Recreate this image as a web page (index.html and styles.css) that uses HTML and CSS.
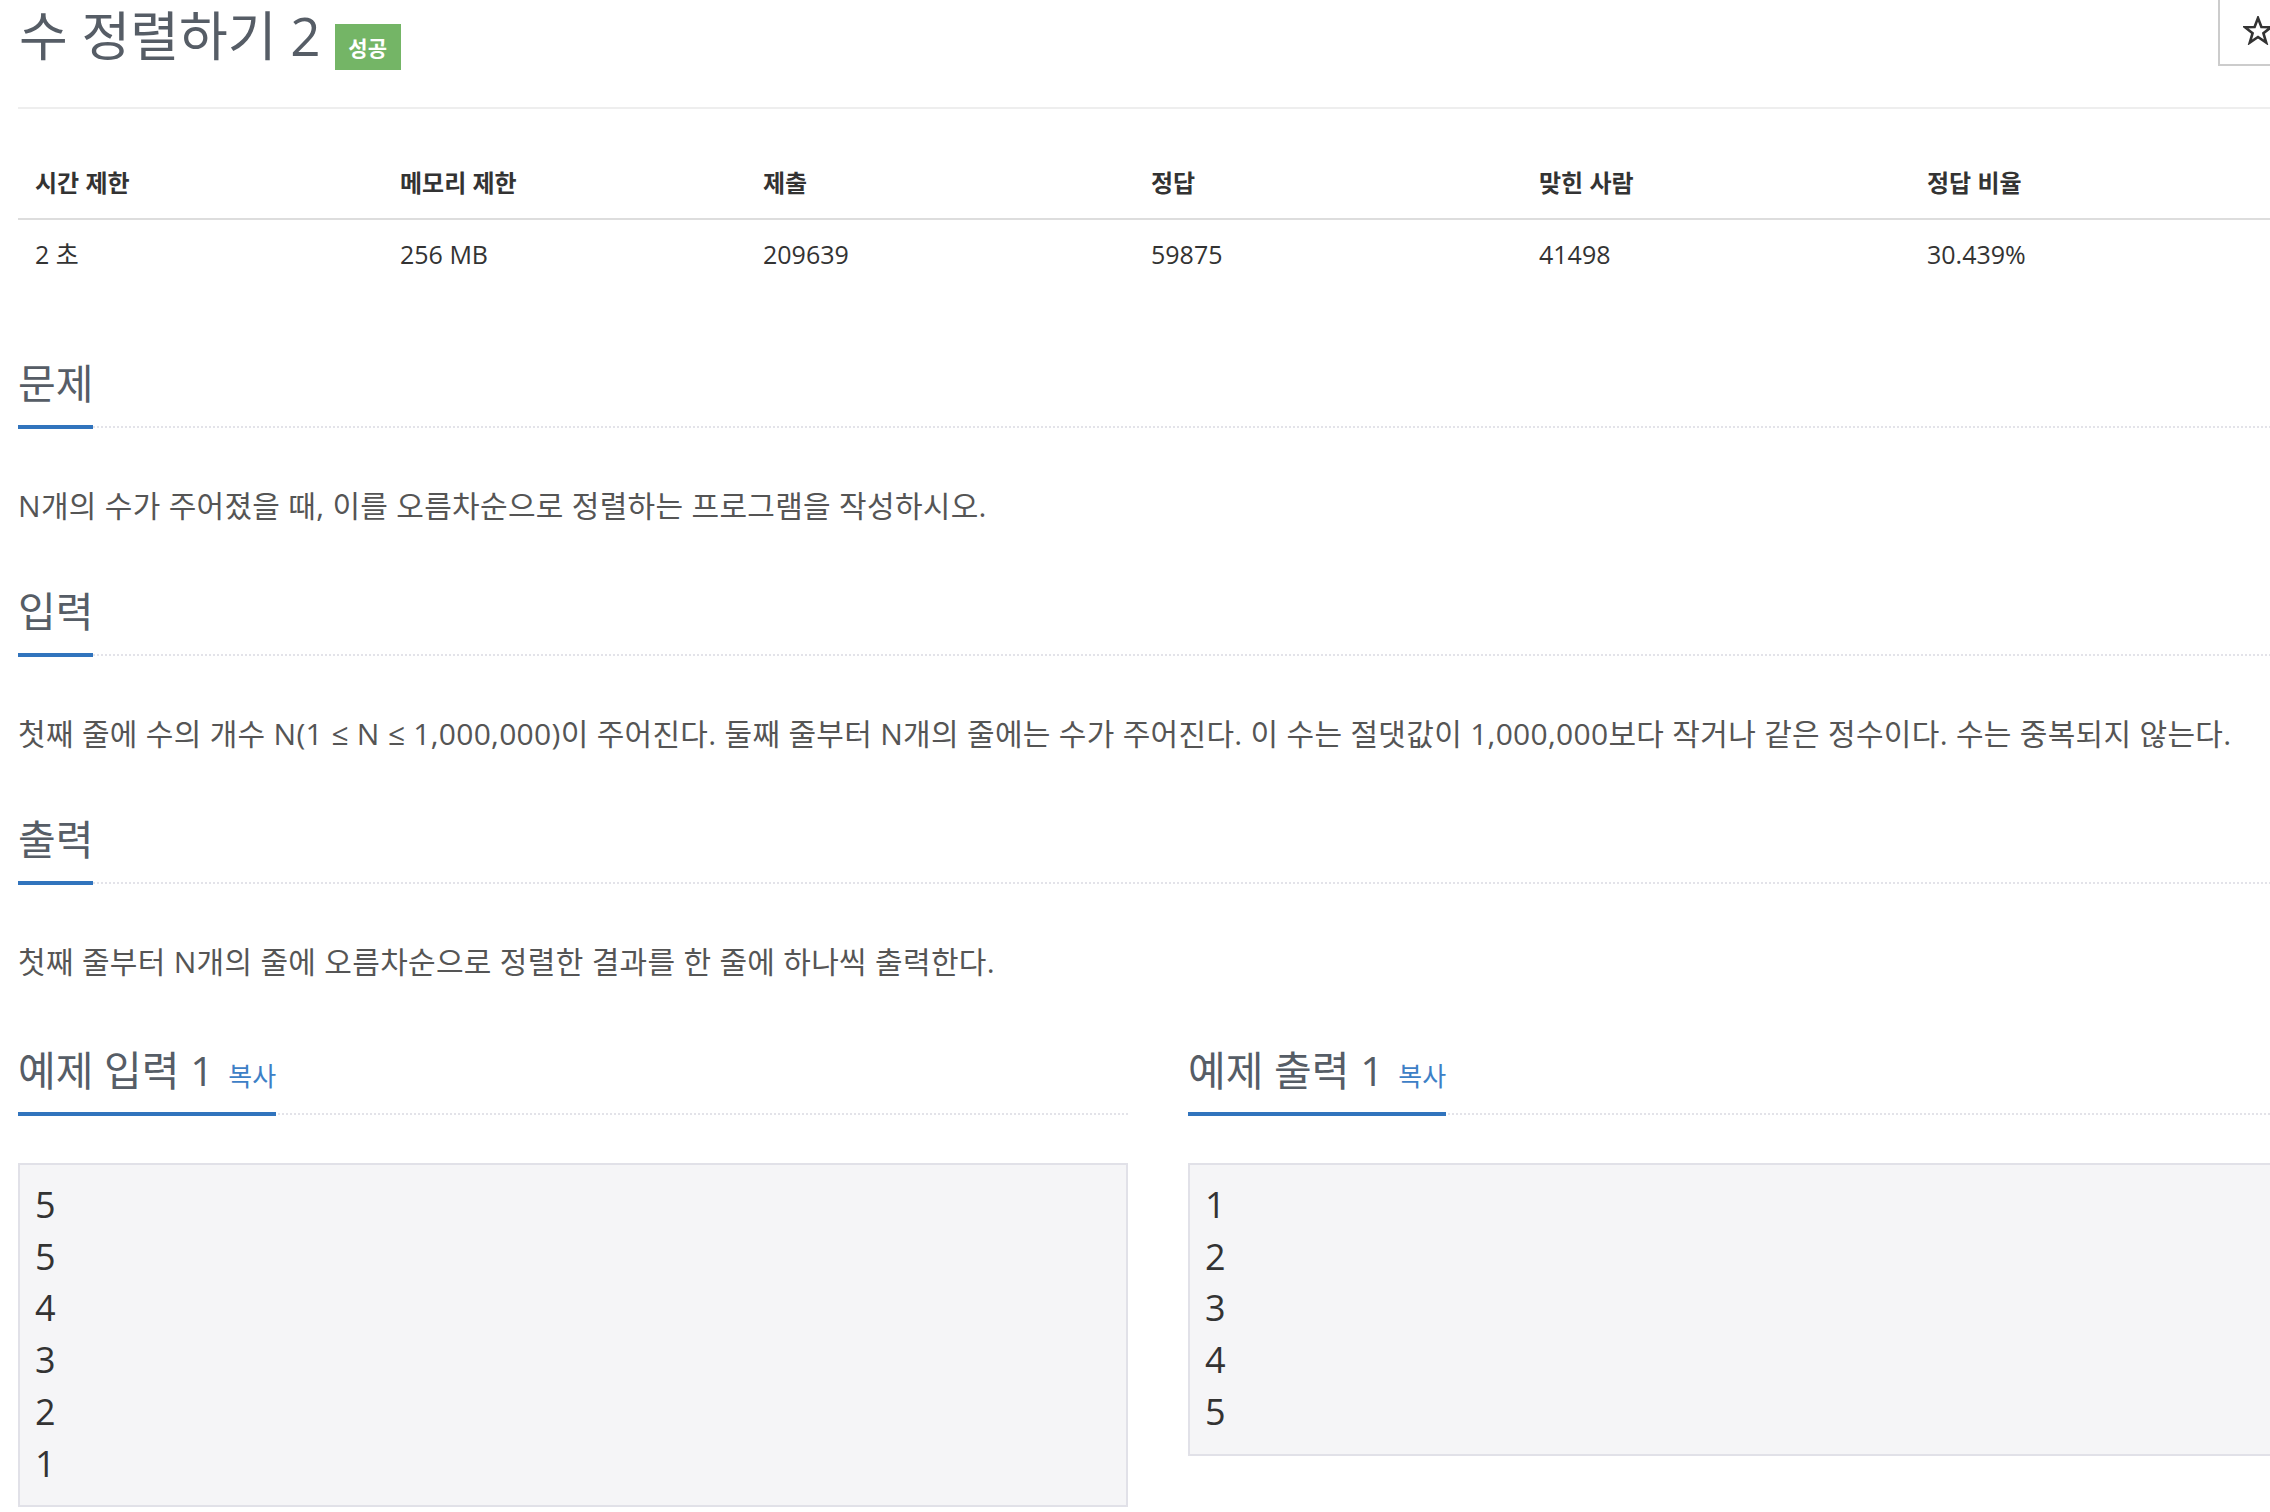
FILE: index.html
```html
<!DOCTYPE html>
<html lang="ko">
<head>
<meta charset="utf-8">
<title>수 정렬하기 2</title>
<link rel="stylesheet" href="styles.css">
</head>
<body>
<div class="page">
  <div class="page-header">
    <h1 class="title">수 정렬하기 2</h1>
    <span class="badge">성공</span>
    <button class="star-btn" type="button" aria-label="즐겨찾기">
      <svg width="30" height="29" viewBox="0 0 30 29"><polygon points="15,2 18.4,11 28,11.2 20.4,17.2 23.2,26.6 15,21 6.8,26.6 9.6,17.2 2,11.2 11.6,11" fill="none" stroke="#333" stroke-width="2.6" stroke-linejoin="miter"/></svg>
    </button>
  </div>

  <table class="info">
    <colgroup>
      <col class="c1"><col class="c2"><col class="c3"><col class="c3"><col class="c3"><col class="c3">
    </colgroup>
    <thead>
      <tr><th>시간 제한</th><th>메모리 제한</th><th>제출</th><th>정답</th><th>맞힌 사람</th><th>정답 비율</th></tr>
    </thead>
    <tbody>
      <tr><td>2 초</td><td>256 MB</td><td>209639</td><td>59875</td><td>41498</td><td>30.439%</td></tr>
    </tbody>
  </table>

  <section class="section first">
    <div class="section-head"><h2>문제</h2></div>
    <p class="text">N개의 수가 주어졌을 때, 이를 오름차순으로 정렬하는 프로그램을 작성하시오.</p>
  </section>

  <section class="section">
    <div class="section-head"><h2>입력</h2></div>
    <p class="text">첫째 줄에 수의 개수 N(1 ≤ N ≤ 1,000,000)이 주어진다. 둘째 줄부터 N개의 줄에는 수가 주어진다. 이 수는 절댓값이 1,000,000보다 작거나 같은 정수이다. 수는 중복되지 않는다.</p>
  </section>

  <section class="section">
    <div class="section-head"><h2>출력</h2></div>
    <p class="text">첫째 줄부터 N개의 줄에 오름차순으로 정렬한 결과를 한 줄에 하나씩 출력한다.</p>
  </section>

  <div class="samples">
    <section class="sample">
      <div class="section-head"><h2>예제 입력 1 <a class="copy" href="#">복사</a></h2></div>
      <pre class="sampledata">5
5
4
3
2
1</pre>
    </section>
    <section class="sample">
      <div class="section-head"><h2>예제 출력 1 <a class="copy" href="#">복사</a></h2></div>
      <pre class="sampledata">1
2
3
4
5</pre>
    </section>
  </div>
</div>
</body>
</html>
```

FILE: styles.css
```css
html {
  overflow: hidden;
}

body {
  margin: 0;
  background: #fff;
  font-family: "Open Sans", "Noto Sans CJK KR", sans-serif;
  color: #555;
}

.page {
  position: relative;
  width: 2280px;
  padding-left: 18px;
}

.page-header {
  display: flex;
  align-items: center;
  height: 72px;
  padding-bottom: 35px;
  border-bottom: 2px solid #eeeeee;
}

.title {
  margin: 0;
  font-size: 53px;
  line-height: 72px;
  font-weight: 400;
  color: #565d66;
  padding-left: 1px;
}

.badge {
  display: flex;
  align-items: center;
  justify-content: center;
  width: 66px;
  height: 46px;
  margin-left: 14px;
  margin-top: 22px;
  background: #74b566;
  color: #fff;
  font-size: 21px;
  font-weight: 700;
}

.star-btn {
  position: absolute;
  top: -2px;
  right: 0;
  width: 80px;
  height: 68px;
  border: 2px solid #cccccc;
  background: #fff;
  padding: 0;
  display: flex;
  align-items: center;
  justify-content: center;
}

.star-btn svg {
  display: block;
  margin-top: -4px;
}

.info {
  width: 2280px;
  margin-top: 43px;
  border-collapse: collapse;
  table-layout: fixed;
  color: #333;
}

.info .c1 { width: 365px; }
.info .c2 { width: 363px; }
.info .c3 { width: 388px; }

.info th {
  height: 66px;
  padding: 0 17px;
  vertical-align: top;
  text-align: left;
  font-size: 24px;
  font-weight: 700;
  line-height: 61px;
  border-bottom: 2px solid #dddddd;
}

.info td {
  height: 70px;
  padding: 0 17px;
  vertical-align: top;
  font-size: 25px;
  line-height: 68px;
}

.section {
  margin-top: 59px;
}

.section.first {
  margin-top: 67px;
}

.section-head {
  display: flex;
  align-items: flex-end;
  border-bottom: 2px dotted #e3e3e9;
}

.section-head h2 {
  margin: 0 0 -3px;
  padding-bottom: 16px;
  border-bottom: 4px solid #3174bd;
  font-size: 41px;
  line-height: 52px;
  font-weight: 400;
  color: #565d66;
}

.copy {
  margin-left: 4px;
  font-size: 26px;
  line-height: 1;
  color: #3d80c6;
  text-decoration: none;
}

.text {
  margin: 58px 0 0;
  font-size: 30px;
  line-height: 40px;
  letter-spacing: 0.3px;
  color: #555;
}

.samples {
  display: grid;
  grid-template-columns: 1110px 1110px;
  column-gap: 60px;
  margin-top: 62px;
}

.sampledata {
  margin: 48px 0 0;
  padding: 14px 15px 16px;
  background: #f5f5f7;
  border: 2px solid #e1e1e8;
  font-family: "Open Sans", "Noto Sans CJK KR", sans-serif;
  font-size: 36px;
  line-height: 51.7px;
  color: #333;
}
```
